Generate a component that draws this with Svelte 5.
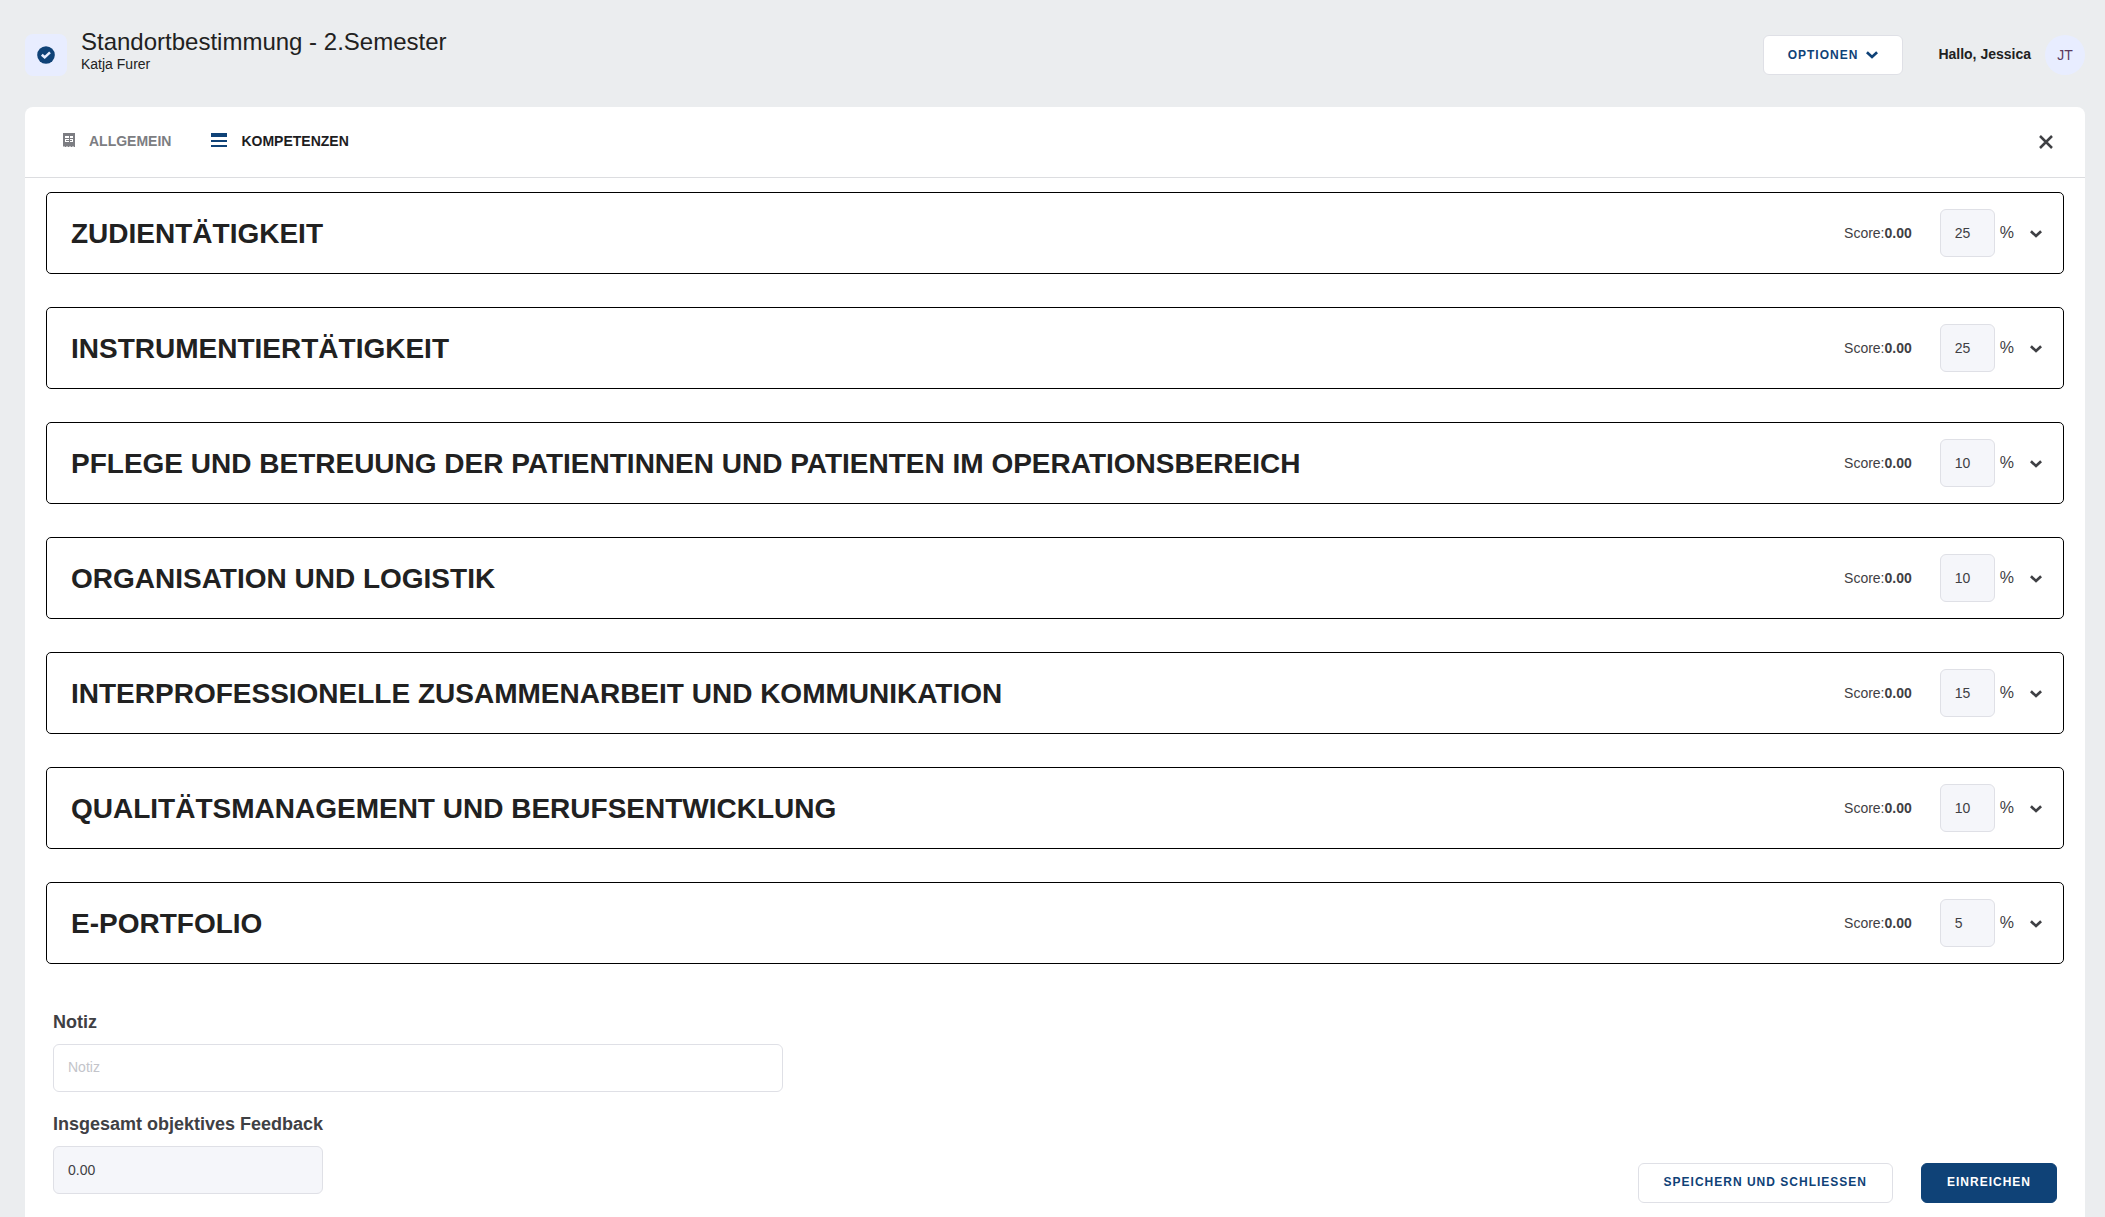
<script>
	let competences = $state([
		{ title: 'Zudientätigkeit', score: '0.00', weight: 25, open: false },
		{ title: 'Instrumentiertätigkeit', score: '0.00', weight: 25, open: false },
		{ title: 'Pflege und Betreuung der Patientinnen und Patienten im Operationsbereich', score: '0.00', weight: 10, open: false },
		{ title: 'Organisation und Logistik', score: '0.00', weight: 10, open: false },
		{ title: 'Interprofessionelle Zusammenarbeit und Kommunikation', score: '0.00', weight: 15, open: false },
		{ title: 'Qualitätsmanagement und Berufsentwicklung', score: '0.00', weight: 10, open: false },
		{ title: 'E-Portfolio', score: '0.00', weight: 5, open: false }
	]);

	let note = $state('');
	let total = '0.00';
</script>

{#snippet chevron()}
	<svg class="chevron" viewBox="0 0 12 8" width="12" height="8" aria-hidden="true">
		<path d="M.9 1.2 6 6l5.100-4.800" fill="none" stroke="currentColor" stroke-width="2.700" />
	</svg>
{/snippet}

<div class="page">
	<header class="topbar">
		<div class="badge">
			<svg viewBox="0 0 18 18" width="18" height="18" aria-hidden="true">
				<circle cx="9" cy="9" r="8.800" fill="#0f4277" />
				<path d="M4.800 8.700 7.700 11.300 13 6.300" fill="none" stroke="#e8edff" stroke-width="2.500" />
			</svg>
		</div>
		<div class="heading">
			<h1>Standortbestimmung - 2.Semester</h1>
			<p>Katja Furer</p>
		</div>
		<button class="btn options" type="button">Optionen {@render chevron()}</button>
		<span class="greeting">Hallo, Jessica</span>
		<span class="avatar">JT</span>
	</header>

	<main class="panel">
		<nav class="tabs">
			<a class="tab" href="#allgemein">
				<svg viewBox="0 0 16 16" width="16" height="16" aria-hidden="true">
					<path
						fill="currentColor"
						fill-rule="evenodd"
						d="M2 1h12v14h-1l-1-1-1 1h-1l-1-1-1 1H7l-1-1-1 1H4l-1-1-1 1zM4 4v2h4V4zM9 4v2h3V4zM4 7v3h4V7zM9 7v3h3V7z"
					/>
					<path fill="currentColor" d="M5 8h6v1H5z" />
				</svg>
				Allgemein
			</a>
			<a class="tab active" href="#kompetenzen" aria-current="page">
				<svg viewBox="0 0 16 16" width="16" height="16" aria-hidden="true">
					<path fill="#0f4277" d="M0 1h16v4H0zM0 8h16v2H0zM0 13h16v2H0z" />
				</svg>
				Kompetenzen
			</a>
			<button class="close" type="button" aria-label="Schliessen">
				<svg viewBox="0 0 14 14" width="14" height="14" aria-hidden="true">
					<path d="M1 1l12 12M13 1 1 13" fill="none" stroke="currentColor" stroke-width="2.500" />
				</svg>
			</button>
		</nav>

		<div class="list">
			{#each competences as item}
				<section class="card">
					<h2>{item.title}</h2>
					<span class="score">Score:<b>{item.score}</b></span>
					<input
						class="field weight"
						type="text"
						aria-label="Gewichtung {item.title}"
						value={item.weight}
						readonly
					/>
					<span class="percent">%</span>
					<button
						class="toggle"
						type="button"
						aria-label="{item.title} aufklappen"
						aria-expanded={item.open}
						onclick={() => (item.open = !item.open)}
					>
						{@render chevron()}
					</button>
				</section>
			{/each}
		</div>

		<form class="summary" onsubmit={(e) => e.preventDefault()}>
			<div class="fields">
				<label for="note">Notiz</label>
				<input class="field note" id="note" type="text" placeholder="Notiz" bind:value={note} />
				<label for="total">Insgesamt objektives Feedback</label>
				<input class="field total" id="total" type="text" value={total} readonly />
			</div>
			<div class="actions">
				<button class="btn" type="button">Speichern und schliessen</button>
				<button class="btn primary" type="submit">Einreichen</button>
			</div>
		</form>
	</main>
</div>

<style>
	:global(body) {
		margin: 0;
		background: #ebedef;
	}
	.page {
		box-sizing: border-box;
		min-height: 100vh;
		display: flex;
		flex-direction: column;
		padding: 0 20px 0 25px;
		font-family: 'Liberation Sans', Arial, sans-serif;
		font-size: 14px;
		color: #3f4044;
	}
	.page * {
		box-sizing: border-box;
	}
	.topbar {
		display: flex;
		align-items: center;
		height: 107px;
		padding-top: 3px;
		color: #212121;
	}
	.badge {
		display: flex;
		align-items: center;
		justify-content: center;
		width: 42px;
		height: 42px;
		margin-right: 14px;
		border-radius: 8px;
		background: #e8edff;
	}
	.heading {
		flex: 1;
		padding-bottom: 8px;
	}
	h1 {
		margin: 0;
		font-size: 24px;
		font-weight: 400;
		line-height: 26px;
	}
	.heading p {
		margin: 0;
		font-size: 14px;
		line-height: 18px;
	}
	.btn {
		display: flex;
		align-items: center;
		height: 40px;
		padding: 0 25px 2px;
		border: 1px solid #dfe0e6;
		border-radius: 6px;
		background: #fff;
		color: #0f4277;
		font-family: inherit;
		font-size: 12px;
		font-weight: 700;
		letter-spacing: 1px;
		text-transform: uppercase;
		cursor: pointer;
	}
	.btn.primary {
		border-color: #0f4277;
		background: #0f4277;
		color: #fff;
	}
	.options {
		gap: 8px;
		padding: 0 24px 1px;
		margin-right: 35px;
	}
	.greeting {
		margin-right: 14px;
		padding-bottom: 2px;
		font-size: 14px;
		font-weight: 700;
	}
	.avatar {
		display: flex;
		align-items: center;
		justify-content: center;
		width: 40px;
		height: 40px;
		padding-bottom: 1px;
		border-radius: 50%;
		background: #e8edff;
		color: #5b3a5e;
	}
	.panel {
		flex: 1;
		border-radius: 8px 8px 0 0;
		background: #fff;
	}
	.tabs {
		display: flex;
		align-items: center;
		gap: 40px;
		height: 71px;
		padding: 0 30px 2px 36px;
		border-bottom: 1px solid #dcdde0;
	}
	.tab {
		display: flex;
		align-items: center;
		gap: 12px;
		color: #7c7d82;
		font-size: 14px;
		font-weight: 700;
		text-decoration: none;
		text-transform: uppercase;
	}
	.tab svg {
		margin-bottom: 2px;
	}
	.tab.active {
		gap: 14px;
		color: #1d1d1f;
	}
	.close,
	.toggle {
		display: flex;
		padding: 3px 2px 2px;
		border: 0;
		background: none;
		color: #3f4044;
		cursor: pointer;
	}
	.close {
		margin-left: auto;
	}
	.list {
		display: flex;
		flex-direction: column;
		gap: 33px;
		padding: 14px 21px 0;
	}
	.card {
		display: flex;
		align-items: center;
		height: 82px;
		padding: 0 19px 0 24px;
		border: 1px solid #000;
		border-radius: 5px;
	}
	h2 {
		flex: 1;
		margin: 0;
		padding-top: 2px;
		color: #212121;
		font-size: 28px;
		font-weight: 700;
		text-transform: uppercase;
	}
	.score {
		margin-right: 28px;
	}
	.field {
		height: 48px;
		padding: 0 14px;
		border: 1px solid #dfe0e6;
		border-radius: 6px;
		background: #f5f6fa;
		color: #3f4044;
		font-family: inherit;
		font-size: 14px;
	}
	.weight {
		width: 55px;
	}
	.percent {
		margin: 0 14px 0 5px;
		font-size: 16px;
	}
	.toggle {
		padding-top: 4px;
	}
	.summary {
		display: flex;
		align-items: flex-end;
		justify-content: space-between;
		padding: 46px 28px 14px;
	}
	.fields {
		display: flex;
		flex-direction: column;
		align-items: flex-start;
		width: 730px;
		padding-bottom: 9px;
	}
	label {
		margin-bottom: 10px;
		font-size: 18px;
		font-weight: 700;
		line-height: 24px;
	}
	.note {
		width: 100%;
		margin-bottom: 20px;
		padding-bottom: 2px;
		background: #fff;
	}
	.note::placeholder {
		color: #c3c4ca;
	}
	.total {
		width: 270px;
	}
	.actions {
		display: flex;
		gap: 28px;
	}
</style>
